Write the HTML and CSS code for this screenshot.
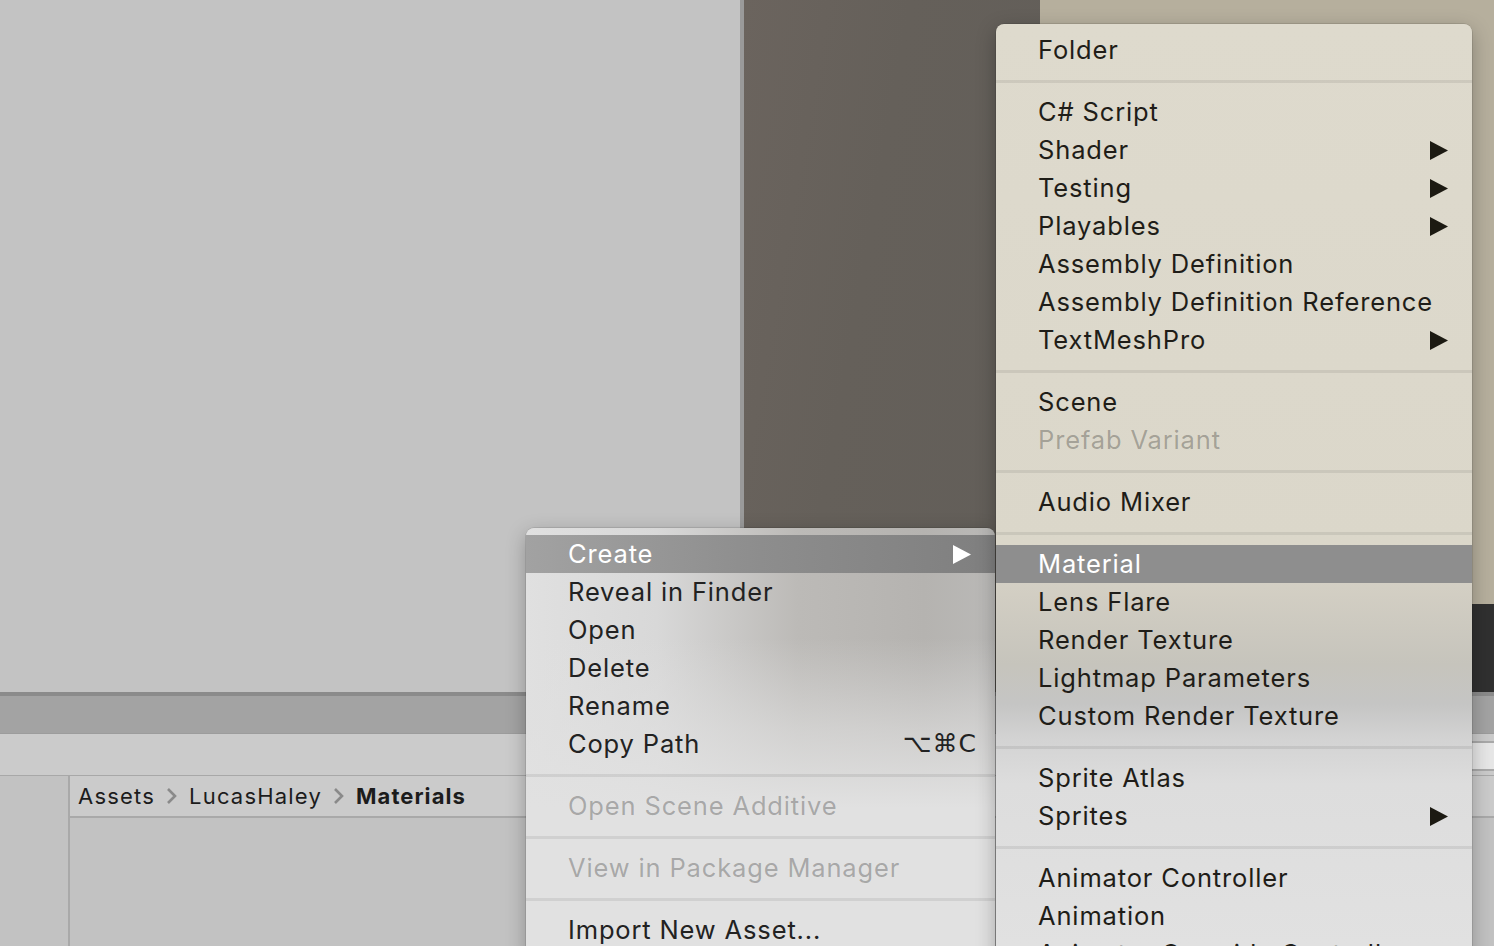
FILE: index.html
```html
<!DOCTYPE html>
<html>
<head>
<meta charset="utf-8">
<link rel="stylesheet" href="styles.css">
</head>
<body>
<div class="app">
  <div class="top">
    <div class="hierarchy"></div>
    <div class="splitter"></div>
    <div class="scene"></div>
    <div class="game">
      <div class="game-view"></div>
      <div class="game-bar"></div>
    </div>
  </div>
  <div class="toolbar"></div>
  <div class="tabbar"><div class="search"></div></div>
  <div class="browser">
    <div class="sidebar"></div>
    <div class="content">
      <div class="breadcrumb">
        <span>Assets</span>
        <svg class="chev" width="12" height="18" viewBox="0 0 12 18"><path d="M2 2L9 9L2 16" fill="none" stroke="#8a8a8a" stroke-width="2.6"/></svg>
        <span>LucasHaley</span>
        <svg class="chev" width="12" height="18" viewBox="0 0 12 18"><path d="M2 2L9 9L2 16" fill="none" stroke="#8a8a8a" stroke-width="2.6"/></svg>
        <span class="current">Materials</span>
      </div>
      <div class="grid"></div>
    </div>
  </div>

  <div class="menu menu-left">
    <div class="item active"><span>Create</span><svg class="arrow" width="18" height="19" viewBox="0 0 18 19"><path d="M0 0L18 9.5L0 19Z"/></svg></div>
    <div class="item"><span>Reveal in Finder</span></div>
    <div class="item"><span>Open</span></div>
    <div class="item"><span>Delete</span></div>
    <div class="item"><span>Rename</span></div>
    <div class="item"><span>Copy Path</span><span class="shortcut">⌥⌘C</span></div>
    <div class="sep"></div>
    <div class="item disabled"><span>Open Scene Additive</span></div>
    <div class="sep"></div>
    <div class="item disabled"><span>View in Package Manager</span></div>
    <div class="sep"></div>
    <div class="item"><span>Import New Asset...</span></div>
  </div>

  <div class="menu menu-right">
    <div class="item"><span>Folder</span></div>
    <div class="sep"></div>
    <div class="item"><span>C# Script</span></div>
    <div class="item"><span>Shader</span><svg class="arrow" width="18" height="19" viewBox="0 0 18 19"><path d="M0 0L18 9.5L0 19Z"/></svg></div>
    <div class="item"><span>Testing</span><svg class="arrow" width="18" height="19" viewBox="0 0 18 19"><path d="M0 0L18 9.5L0 19Z"/></svg></div>
    <div class="item"><span>Playables</span><svg class="arrow" width="18" height="19" viewBox="0 0 18 19"><path d="M0 0L18 9.5L0 19Z"/></svg></div>
    <div class="item"><span>Assembly Definition</span></div>
    <div class="item"><span>Assembly Definition Reference</span></div>
    <div class="item"><span>TextMeshPro</span><svg class="arrow" width="18" height="19" viewBox="0 0 18 19"><path d="M0 0L18 9.5L0 19Z"/></svg></div>
    <div class="sep"></div>
    <div class="item"><span>Scene</span></div>
    <div class="item disabled"><span>Prefab Variant</span></div>
    <div class="sep"></div>
    <div class="item"><span>Audio Mixer</span></div>
    <div class="sep"></div>
    <div class="item active"><span>Material</span></div>
    <div class="item"><span>Lens Flare</span></div>
    <div class="item"><span>Render Texture</span></div>
    <div class="item"><span>Lightmap Parameters</span></div>
    <div class="item"><span>Custom Render Texture</span></div>
    <div class="sep"></div>
    <div class="item"><span>Sprite Atlas</span></div>
    <div class="item"><span>Sprites</span><svg class="arrow" width="18" height="19" viewBox="0 0 18 19"><path d="M0 0L18 9.5L0 19Z"/></svg></div>
    <div class="sep"></div>
    <div class="item"><span>Animator Controller</span></div>
    <div class="item"><span>Animation</span></div>
    <div class="item"><span>Animator Override Controller</span></div>
  </div>
</div>
</body>
</html>
```

FILE: styles.css
```css
* { box-sizing: border-box; }
html, body { margin: 0; padding: 0; }
body {
  width: 1494px;
  height: 946px;
  overflow: hidden;
  font-family: Inter, "Noto Sans", "DejaVu Sans", sans-serif;
}
.app {
  position: relative;
  width: 1494px;
  height: 946px;
  overflow: hidden;
  display: flex;
  flex-direction: column;
  background: #c2c2c2;
}
.top {
  height: 692px;
  display: flex;
  flex-shrink: 0;
}
.hierarchy { width: 740px; background: #c3c3c3; }
.splitter { width: 4px; background: #9a9a9a; }
.scene {
  width: 296px;
  background: linear-gradient(100deg, #6b645e 0%, #65605a 40%, #625e59 100%);
}
.game { flex: 1; display: flex; flex-direction: column; }
.game-view { flex: 1; background: #b6af9d; }
.game-bar { height: 88px; background: #303030; }
.toolbar {
  height: 41px;
  flex-shrink: 0;
  border-top: 4px solid #8b8b8b;
  background: #a3a3a3;
}
.tabbar {
  height: 42px;
  flex-shrink: 0;
  border-top: 1px solid #9c9c9c;
  background: #cbcbcb;
  display: flex;
  justify-content: flex-end;
  align-items: center;
}
.search {
  width: 120px;
  height: 30px;
  margin-top: 2px;
  background: #e7e7e7;
  border-top: 2px solid #a9a9a9;
  border-bottom: 2px solid #a9a9a9;
}
.browser {
  flex: 1;
  display: flex;
  border-top: 1px solid #a8a8a8;
}
.sidebar {
  width: 70px;
  background: #c2c2c2;
  border-right: 2px solid #a9a9a9;
}
.content { flex: 1; display: flex; flex-direction: column; }
.breadcrumb {
  height: 42px;
  background: #cbcbcb;
  border-bottom: 2px solid #a9a9a9;
  display: flex;
  align-items: center;
  padding: 0 0 1px 8px;
  gap: 11px;
  font-size: 22px;
  letter-spacing: 1.2px;
  color: #1c1c1c;
}
.breadcrumb .first { letter-spacing: 0.7px; }
.breadcrumb .current { font-weight: 700; letter-spacing: 1.05px; }
.chev { display: block; }
.grid { flex: 1; background: #c2c2c2; }

/* Menus */
.menu {
  position: absolute;
  padding-top: 7px;
  border-radius: 8px 8px 0 0;
  font-size: 25.5px;
  letter-spacing: 0.85px;
  color: #1f1d18;
  box-shadow: 0 0 0 0.5px rgba(0,0,0,0.18), 0 6px 20px rgba(0,0,0,0.28);
}
.menu-left {
  left: 526px;
  top: 528px;
  width: 469px;
  height: 430px;
  background-image:
    linear-gradient(to bottom, rgba(224,224,224,0) 0px, rgba(224,224,224,0) 110px, rgba(224,224,224,0.6) 200px, #e1e1e1 280px),
    linear-gradient(to right, #e0e0e0 0%, #d8d8d8 28%, #bcbab7 58%, #b5b3b0 85%, #bab9b7 100%);
  color: #222;
}
.menu-right {
  left: 996px;
  top: 24px;
  width: 476px;
  height: 940px;
  background: linear-gradient(to bottom,
    #dedacd 0px, #dbd7ca 520px, #d2cec3 570px, #c6c4bc 640px,
    #c5c5c4 680px, #d3d3d3 715px, #dddddd 760px, #e1e1e1 920px);
}
.item {
  height: 38px;
  display: flex;
  align-items: center;
  justify-content: space-between;
  padding: 0 18px 2px 42px;
  white-space: nowrap;
}
.item .arrow { fill: #1c1a12; margin: 2px 6px 0 0; display: block; }
.item.active { color: #fff; background: #8e8e8e; }
.menu-left .item.active { background: linear-gradient(to right, #a2a2a2, #8d8d8d 50%, #7f7f7f); }
.item.active .arrow { fill: #fff; }
.item.disabled { color: rgba(0,0,0,0.27); }
.shortcut { font-family: "DejaVu Sans", Inter, sans-serif; font-size: 25px; letter-spacing: 1px; }
.sep {
  height: 3px;
  margin: 11px 0 10px;
  background: rgba(0,0,0,0.075);
}
```
